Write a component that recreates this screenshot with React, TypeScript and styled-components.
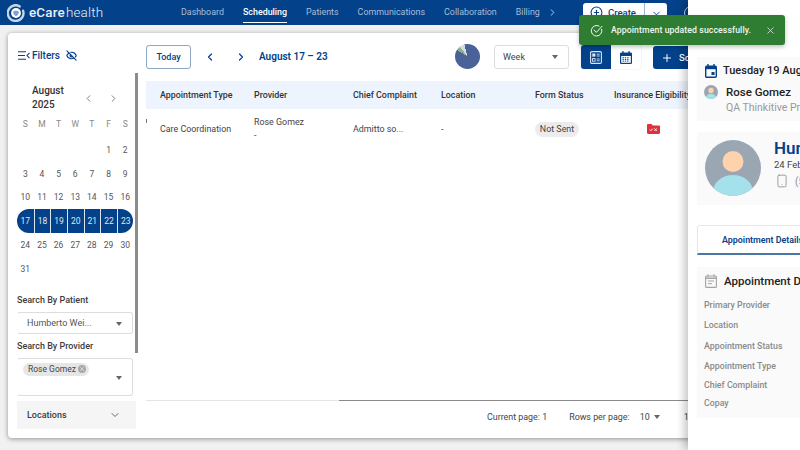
import React from "react";
import styled, { createGlobalStyle } from "styled-components";
import {
    ChevronDown,
    ChevronLeft,
    ChevronRight,
    CirclePlus,
    EyeOff,
    Plus,
    Smartphone,
    X,
} from "lucide-react";

const NAVY = "#03418a";

const GlobalStyle = createGlobalStyle`
    html, body {
        margin: 0;
        padding: 0;
        width: 800px;
        height: 450px;
        overflow: hidden;
        font-family: Roboto, "Liberation Sans", sans-serif;
        background: #f1f1f1;
        color: #333;
    }
    * { box-sizing: border-box; }
`;

const Page = styled.div`
    position: relative;
    width: 800px;
    height: 450px;
    overflow: hidden;
`;

/* ---------- top bar ---------- */
const TopBar = styled.header`
    height: 25px;
    background: ${NAVY};
    display: flex;
    align-items: center;
    padding-left: 7px;
`;

const Logo = styled.div`
    width: 174px;
    display: flex;
    align-items: center;
    gap: 4px;
    color: #e9eff6;
    font-size: 13.4px;
    line-height: 1;
    letter-spacing: 0.2px;
    b { font-weight: 500; }
    span { font-weight: 300; margin-left: 1px; }
`;

const Nav = styled.nav`
    display: flex;
    align-items: center;
    gap: 19px;
    height: 25px;
    width: 402px;
`;

const NavItem = styled.a<{ $active?: boolean }>`
    height: 25px;
    padding-top: 7px;
    font-size: 8.9px;
    line-height: 11px;
    color: ${(p) => (p.$active ? "#fff" : "#a9bdd6")};
    font-weight: ${(p) => (p.$active ? 500 : 400)};
    position: relative;
    ${(p) =>
        p.$active &&
        `&::after {
            content: "";
            position: absolute;
            left: 0;
            right: 0;
            bottom: 2px;
            height: 1px;
            background: #fff;
        }`}
`;

const NavMore = styled.span`
    display: flex;
    margin-left: -12px;
    color: #c5d3e4;
`;

const CreateGroup = styled.div`
    width: 84px;
    height: 19px;
    background: #fff;
    border-radius: 3px;
    display: flex;
    align-items: flex-start;
    color: ${NAVY};
    font-size: 9.5px;
    font-weight: 500;
`;

const CreateMain = styled.div`
    flex: 1;
    height: 100%;
    display: flex;
    gap: 5px;
    padding: 3px 0 0 7px;
    line-height: 13px;
    border-right: 1px solid #9fb5cf;
`;

const CreateCaret = styled.div`
    width: 22px;
    display: flex;
    justify-content: center;
    padding-top: 5px;
`;

const UserCircle = styled.div`
    width: 14px;
    height: 14px;
    margin-left: 17px;
    border-radius: 50%;
    border: 1.5px solid #c5d3e4;
`;

/* ---------- main card ---------- */
const Content = styled.main`
    padding: 8px 0 0 8px;
`;

const Card = styled.section`
    width: 784px;
    height: 405px;
    background: #fff;
    border-radius: 4px;
    box-shadow: 0 1px 5px rgba(0, 0, 0, 0.4);
    display: flex;
    overflow: hidden;
`;

const Sidebar = styled.aside`
    position: relative;
    width: 138px;
    flex: none;
    padding: 14px 0 0 9px;
`;

const FiltersRow = styled.div`
    display: flex;
    align-items: center;
    color: ${NAVY};
    font-size: 10px;
    font-weight: 500;
    height: 16px;
    gap: 6px;
    margin-left: 1px;
    span { margin-left: -4px; }
`;

const SideScroll = styled.div`
    position: absolute;
    left: 127px;
    top: 40px;
    width: 2.5px;
    height: 280px;
    background: #8c8c8c;
`;

const CalHead = styled.div`
    display: flex;
    align-items: center;
    margin-top: 20px;
    padding-left: 15px;
    width: 102px;
    height: 30px;
    justify-content: space-between;
`;

const CalTitle = styled.div`
    width: 36px;
    font-size: 10px;
    font-weight: 500;
    line-height: 14px;
    color: #333;
`;

const CalArrows = styled.div`
    display: flex;
    gap: 14px;
    color: #777;
`;

const WeekRow = styled.div`
    display: grid;
    grid-template-columns: repeat(7, 16.65px);
    height: 14px;
    margin-top: 4px;
`;

const WeekDay = styled.div`
    display: flex;
    align-items: center;
    justify-content: center;
    font-size: 8.5px;
    color: #888;
`;

const CalGrid = styled.div`
    display: grid;
    grid-template-columns: repeat(7, 16.65px);
    grid-auto-rows: 23.75px;
    width: 117px;
    margin-top: 7px;
`;

const DayCell = styled.div<{ $sel?: boolean; $first?: boolean; $last?: boolean }>`
    display: flex;
    align-items: center;
    justify-content: center;
    font-size: 8.5px;
    color: ${(p) => (p.$sel ? "#dfe8f3" : "#555")};
    background: ${(p) => (p.$sel ? NAVY : "transparent")};
    border-left: ${(p) => (p.$sel && !p.$first ? "1.5px solid #dbe5f0" : "none")};
    border-radius: ${(p) =>
        p.$first ? "12px 0 0 12px" : p.$last ? "0 12px 12px 0" : "0"};
`;

const FieldLabel = styled.div<{ $top: number }>`
    margin-top: ${(p) => p.$top}px;
    font-size: 9px;
    font-weight: 500;
    color: #3c3c3c;
    line-height: 12px;
`;

const Field = styled.div<{ $tall?: boolean }>`
    position: relative;
    width: 116px;
    height: ${(p) => (p.$tall ? "38px" : "22px")};
    margin-top: 6px;
    border: 1px solid #ddd;
    border-left-color: transparent;
    border-radius: 3px;
    font-size: 9px;
    color: #555;
    display: flex;
    align-items: ${(p) => (p.$tall ? "flex-start" : "center")};
    padding: ${(p) => (p.$tall ? "4px 0 0 5px" : "0 0 0 9px")};
`;

const Caret = styled.span<{ $color?: string }>`
    width: 0;
    height: 0;
    border-left: 3.5px solid transparent;
    border-right: 3.5px solid transparent;
    border-top: 4px solid ${(p) => p.$color || "#666"};
    display: inline-block;
`;

const FieldCaret = styled(Caret)`
    position: absolute;
    right: 10px;
    top: calc(50% - 1px);
`;

const Chip = styled.div`
    height: 13px;
    width: 66px;
    border-radius: 7px;
    background: #e6e6e6;
    display: flex;
    align-items: center;
    justify-content: space-between;
    padding: 0 3px 0 5px;
    font-size: 8.5px;
    color: #444;
`;

const ChipClose = styled.span`
    width: 8px;
    height: 8px;
    border-radius: 50%;
    background: #a8a8a8;
    color: #e6e6e6;
    display: flex;
    align-items: center;
    justify-content: center;
`;

const Accordion = styled.div`
    width: 119px;
    height: 28px;
    margin-top: 5px;
    background: #f5f5f5;
    display: flex;
    align-items: center;
    justify-content: space-between;
    padding: 0 15px 0 10px;
    font-size: 9px;
    font-weight: 500;
    color: #3c3c3c;
`;

/* ---------- schedule area ---------- */
const Schedule = styled.div`
    flex: 1;
    display: flex;
    flex-direction: column;
    min-width: 0;
`;

const Toolbar = styled.div`
    height: 48px;
    padding-top: 12px;
    display: flex;
    align-items: flex-start;
`;

const TodayButton = styled.button`
    width: 45px;
    height: 24px;
    border: 1px solid #8ea7c4;
    border-radius: 3px;
    background: #fff;
    color: ${NAVY};
    font: 500 9px Roboto, sans-serif;
    padding: 0;
`;

const ArrowBtn = styled.span<{ $first?: boolean }>`
    width: 31px;
    height: 24px;
    margin-left: ${(p) => (p.$first ? "3px" : "0")};
    display: flex;
    align-items: center;
    justify-content: center;
    color: ${NAVY};
`;

const RangeTitle = styled.div`
    margin-left: 3px;
    width: 196px;
    line-height: 24px;
    color: ${NAVY};
    font-size: 10px;
    font-weight: 600;
`;

const Spinner = styled.div`
    width: 25px;
    height: 25px;
    margin-top: -1px;
    border-radius: 50%;
    background: conic-gradient(#4a6298 0 302deg, #8fb08a 302deg 322deg, #d5dde2 322deg 345deg, #4a6298 345deg);
`;

const WeekSelect = styled.div`
    width: 75px;
    height: 24px;
    margin-left: 14px;
    border: 1px solid #ddd;
    border-radius: 3px;
    display: flex;
    align-items: center;
    justify-content: space-between;
    padding: 0 10px 0 8px;
    font-size: 9px;
    color: #444;
`;

const Toggle = styled.div`
    display: flex;
    margin-left: 12px;
    height: 24px;
    width: 60px;
    border-radius: 3px;
    box-shadow: 0 0 1px rgba(0, 0, 0, 0.35);
    overflow: hidden;
`;

const ToggleItem = styled.div<{ $on?: boolean }>`
    width: 30px;
    display: flex;
    align-items: center;
    justify-content: center;
    background: ${(p) => (p.$on ? NAVY : "#fff")};
    color: ${(p) => (p.$on ? "#dce6f2" : NAVY)};
`;

const ScheduleButton = styled.div`
    margin-left: 12px;
    width: 90px;
    height: 23px;
    margin-top: 1px;
    background: ${NAVY};
    color: #fff;
    border-radius: 3px;
    display: flex;
    align-items: center;
    gap: 6px;
    padding-left: 8px;
    font-size: 9.5px;
    font-weight: 500;
`;

const COLUMNS = "94px 99px 88px 94px 79px 120px";

const TableHead = styled.div`
    display: grid;
    grid-template-columns: ${COLUMNS};
    align-items: center;
    height: 28px;
    padding-left: 14px;
    background: #eef4fd;
    font-size: 8.9px;
    font-weight: 500;
    color: #333;
    white-space: nowrap;
`;

const TableRow = styled.div`
    position: relative;
    display: grid;
    grid-template-columns: ${COLUMNS};
    align-items: center;
    height: 40px;
    padding-left: 14px;
    font-size: 8.9px;
    color: #444;
    &::before {
        content: "";
        position: absolute;
        left: 0;
        top: 10px;
        width: 1px;
        height: 4px;
        background: #777;
    }
`;

const ProviderCell = styled.div`
    line-height: 13px;
`;

const StatusPill = styled.span`
    display: inline-block;
    width: 44px;
    height: 15px;
    line-height: 15px;
    text-align: center;
    border-radius: 8px;
    background: #ececec;
    color: #444;
`;

const FolderCell = styled.div`
    padding-left: 33px;
    display: flex;
`;

const TableSpacer = styled.div`
    flex: 1;
`;

const TableRule = styled.div`
    height: 1px;
    background: linear-gradient(to right, #e4e4e4 0 193px, #8a8a8a 193px);
`;

const Footer = styled.div`
    height: 37px;
    display: flex;
    align-items: center;
    padding: 0 0 5px 341px;
    font-size: 8.9px;
    color: #444;
    white-space: nowrap;
`;

const RowsPer = styled.span`
    margin-left: 22px;
`;

const RowsValue = styled.span`
    margin-left: 10px;
    display: flex;
    align-items: center;
    gap: 4px;
`;

const PageRange = styled.span`
    margin-left: 24px;
`;

/* ---------- toast ---------- */
const Toast = styled.div`
    position: absolute;
    left: 579px;
    top: 15px;
    width: 206px;
    height: 30px;
    background: #2e7d32;
    border-radius: 3px;
    box-shadow: 0 2px 4px rgba(0, 0, 0, 0.25);
    color: #f2f7f2;
    display: flex;
    align-items: center;
    padding-left: 11px;
    font-size: 8.7px;
    font-weight: 500;
    z-index: 5;
`;

const ToastText = styled.span`
    margin-left: 8px;
    flex: 1;
    letter-spacing: 0.1px;
`;

const ToastClose = styled.span`
    display: flex;
    margin-right: 9px;
`;

/* ---------- side drawer ---------- */
const Drawer = styled.aside`
    position: absolute;
    left: 688px;
    top: 0;
    width: 112px;
    height: 450px;
    background: #fff;
    box-shadow: -4px 0 8px rgba(0, 0, 0, 0.22);
    overflow: hidden;
    z-index: 3;
    padding: 57px 0 0 9px;
`;

const DrawerInner = styled.div`
    width: 400px;
`;

const Panel = styled.div`
    background: #fafafa;
    padding: 6px 8px;
`;

const DateLine = styled.div`
    display: flex;
    align-items: center;
    gap: 6px;
    color: #222;
    font-size: 11px;
    font-weight: 500;
    height: 15px;
`;

const ProviderLine = styled.div`
    display: flex;
    gap: 8px;
    margin-top: 7px;
    margin-left: -1px;
`;

const ProviderName = styled.div`
    font-size: 11.5px;
    font-weight: 500;
    color: #222;
    line-height: 15px;
`;

const ProviderOrg = styled.div`
    font-size: 10.5px;
    color: #999;
    line-height: 15px;
`;

const PatientPanel = styled(Panel)`
    margin-top: 11px;
    height: 73px;
    display: flex;
    gap: 13px;
    padding-top: 8px;
`;

const PatientName = styled.div`
    font-size: 17px;
    font-weight: 600;
    color: ${NAVY};
    line-height: 20px;
    margin-top: -2px;
`;

const PatientDob = styled.div`
    font-size: 9.5px;
    color: #444;
    line-height: 12px;
    margin-top: 1px;
`;

const PatientPhone = styled.div`
    display: flex;
    align-items: center;
    gap: 6px;
    color: #8a8a8a;
    font-size: 10px;
    margin-top: 3px;
    margin-left: 1px;
`;

const Tabs = styled.div`
    margin-top: 20px;
    height: 30px;
    border: 1px solid #e6e6e6;
    border-bottom: 2px solid #4a77a6;
    border-radius: 3px 3px 0 0;
    padding-left: 24px;
    line-height: 29px;
    font-size: 8.9px;
    font-weight: 600;
    color: ${NAVY};
`;

const DetailsPanel = styled(Panel)`
    margin-top: 12px;
    height: 151px;
    padding: 7px 0 0 7px;
`;

const DetailsTitle = styled.div`
    display: flex;
    align-items: center;
    gap: 7px;
    height: 14px;
    font-size: 11.5px;
    font-weight: 500;
    color: #222;
    margin-left: 1px;
`;

const DetailLabel = styled.div<{ $top: number }>`
    margin-top: ${(p) => p.$top}px;
    font-size: 8.8px;
    line-height: 12px;
    font-weight: 500;
    color: #8a8a8a;
`;

const LogoMark = () => (
    <svg width="18" height="18" viewBox="0 0 24 24" fill="none">
        <path d="M17 3.200A10.500 10.500 0 1 0 21.500 9" stroke="#c4d6e8" strokeWidth="3.200" strokeLinecap="round" />
        <circle cx="12" cy="12" r="6.600" fill="#fff" />
        <path d="M8 10.500c1.500-2 6.500-2 8 0-.5 3-2.500 5-4 5.500-1.500-.5-3.500-2.500-4-5.500z" fill="#7fa3c9" />
    </svg>
);

const PersonAvatar = ({ size }: { size: number }) => (
    <svg width={size} height={size} viewBox="0 0 56 56">
        <clipPath id={`av${size}`}>
            <circle cx="28" cy="28" r="28" />
        </clipPath>
        <g clipPath={`url(#av${size})`}>
            <rect width="56" height="56" fill="#9aa7b3" />
            <circle cx="28" cy="21.500" r="10.500" fill="#fdd2ac" />
            <ellipse cx="28" cy="52" rx="20" ry="17" fill="#a4e1ea" />
        </g>
    </svg>
);

const FolderX = () => (
    <svg width="13" height="10" viewBox="0 0 13 10">
        <path d="M0 1.200C0 .5.500 0 1.200 0h3.300l1.200 1.400h6.100c.7 0 1.200.5 1.200 1.200v6.200c0 .7-.5 1.200-1.200 1.200H1.200C.5 10 0 9.500 0 8.800z" fill="#e0323a" />
        <path d="M2.800 5.600l1.100 1.100 1.900-2M7.500 4.500l2.200 2.400M9.700 4.500L7.500 6.900" stroke="#fff" strokeWidth="1" fill="none" />
    </svg>
);

const FilterIcon = () => (
    <svg width="12" height="9" viewBox="0 0 12 9" fill="none" stroke={NAVY} strokeWidth="1.100">
        <path d="M0 .8h8M0 4.500h7M0 8.200h8M11.500 1.800L9 4.500l2.500 2.700" />
    </svg>
);

const ListViewIcon = () => (
    <svg width="12" height="13" viewBox="0 0 12 13" fill="none" stroke="currentColor">
        <rect x=".6" y=".6" width="10.800" height="11.800" rx="1.200" strokeWidth="1.100" />
        <rect x="2.500" y="2.800" width="2.600" height="2.600" fill="currentColor" strokeWidth=".4" />
        <rect x="2.500" y="7.600" width="2.600" height="2.600" strokeWidth=".9" />
        <path d="M6.700 3.200h3M6.700 5h3M6.700 8h3M6.700 9.800h3" strokeWidth=".9" />
    </svg>
);

const CalendarViewIcon = () => (
    <svg width="12" height="13" viewBox="0 0 12 13" fill="none">
        <rect x="0" y="1.500" width="12" height="11.500" rx="1.200" fill="currentColor" />
        <rect x="1.200" y="5" width="9.600" height="6.800" fill="#fff" />
        <path d="M3 0v3M9 0v3" stroke="currentColor" strokeWidth="1.200" />
        <path d="M2.500 6.700h7M2.500 8.400h7M2.500 10.100h7" stroke="currentColor" strokeWidth="1" strokeDasharray="1.400 .9" />
    </svg>
);

const DateIcon = () => (
    <svg width="12" height="14" viewBox="0 0 12 14" fill="none">
        <rect x=".7" y="2.200" width="10.600" height="11" rx="1" stroke={NAVY} strokeWidth="1.400" />
        <path d="M.7 3h10.600v2.200H.7z" fill={NAVY} />
        <path d="M3 0v3M9 0v3" stroke={NAVY} strokeWidth="1.400" />
        <rect x="6.500" y="8" width="3" height="3" fill={NAVY} />
    </svg>
);

const DetailsIcon = () => (
    <svg width="12" height="14" viewBox="0 0 12 14" fill="none" stroke="#a3a3a3">
        <rect x=".6" y="2" width="10.800" height="11.400" rx="1" strokeWidth="1.100" />
        <path d="M.6 4.200h10.800" strokeWidth="1.500" />
        <path d="M3 .3v2.500M9 .3v2.500" strokeWidth="1.100" />
        <path d="M3 7h6M3 9.700h4" strokeWidth="1" />
    </svg>
);

const ToastCheck = () => (
    <svg width="13" height="13" viewBox="0 0 13 13" fill="none" stroke="currentColor" strokeWidth="1" strokeLinecap="round">
        <path d="M11.700 5.300A5.300 5.300 0 1 1 9 2" />
        <path d="M4 6l2.300 2.400L12 2.300" />
    </svg>
);

const weeks: (number | null)[][] = [
    [null, null, null, null, null, 1, 2],
    [3, 4, 5, 6, 7, 8, 9],
    [10, 11, 12, 13, 14, 15, 16],
    [17, 18, 19, 20, 21, 22, 23],
    [24, 25, 26, 27, 28, 29, 30],
    [31, null, null, null, null, null, null],
];

const App = () => {
    return (
        <Page>
            <GlobalStyle />
            <TopBar>
                <Logo>
                    <LogoMark />
                    <div>
                        <b>eCare</b>
                        <span>health</span>
                    </div>
                </Logo>
                <Nav>
                    <NavItem>Dashboard</NavItem>
                    <NavItem $active>Scheduling</NavItem>
                    <NavItem>Patients</NavItem>
                    <NavItem>Communications</NavItem>
                    <NavItem>Collaboration</NavItem>
                    <NavItem>Billing</NavItem>
                    <NavMore>
                        <ChevronRight size={11} />
                    </NavMore>
                </Nav>
                <CreateGroup>
                    <CreateMain>
                        <CirclePlus size={13} />
                        Create
                    </CreateMain>
                    <CreateCaret>
                        <ChevronDown size={11} />
                    </CreateCaret>
                </CreateGroup>
                <UserCircle />
            </TopBar>

            <Content>
                <Card>
                    <Sidebar>
                        <FiltersRow>
                            <FilterIcon />
                            <span>Filters</span>
                            <EyeOff size={11} strokeWidth={2.6} />
                        </FiltersRow>
                        <SideScroll />
                        <CalHead>
                            <CalTitle>August 2025</CalTitle>
                            <CalArrows>
                                <ChevronLeft size={11} />
                                <ChevronRight size={11} />
                            </CalArrows>
                        </CalHead>
                        <WeekRow>
                            {["S", "M", "T", "W", "T", "F", "S"].map((d, i) => (
                                <WeekDay key={i}>{d}</WeekDay>
                            ))}
                        </WeekRow>
                        <CalGrid>
                            {weeks.flat().map((d, i) => (
                                <DayCell
                                    key={i}
                                    $sel={d !== null && d >= 17 && d <= 23}
                                    $first={d === 17}
                                    $last={d === 23}
                                >
                                    {d}
                                </DayCell>
                            ))}
                        </CalGrid>
                        <FieldLabel $top={13}>Search By Patient</FieldLabel>
                        <Field>
                            Humberto Wei...
                            <FieldCaret />
                        </Field>
                        <FieldLabel $top={6}>Search By Provider</FieldLabel>
                        <Field $tall>
                            <Chip>
                                Rose Gomez
                                <ChipClose>
                                    <X size={6} strokeWidth={3} />
                                </ChipClose>
                            </Chip>
                            <FieldCaret />
                        </Field>
                        <Accordion>
                            Locations
                            <ChevronDown size={12} color="#666" />
                        </Accordion>
                    </Sidebar>

                    <Schedule>
                        <Toolbar>
                            <TodayButton>Today</TodayButton>
                            <ArrowBtn $first>
                                <ChevronLeft size={12} strokeWidth={2.4} />
                            </ArrowBtn>
                            <ArrowBtn>
                                <ChevronRight size={12} strokeWidth={2.4} />
                            </ArrowBtn>
                            <RangeTitle>August 17 – 23</RangeTitle>
                            <Spinner />
                            <WeekSelect>
                                Week
                                <Caret />
                            </WeekSelect>
                            <Toggle>
                                <ToggleItem $on>
                                    <ListViewIcon />
                                </ToggleItem>
                                <ToggleItem>
                                    <CalendarViewIcon />
                                </ToggleItem>
                            </Toggle>
                            <ScheduleButton>
                                <Plus size={12} />
                                Schedule
                            </ScheduleButton>
                        </Toolbar>
                        <TableHead>
                            <div>Appointment Type</div>
                            <div>Provider</div>
                            <div>Chief Complaint</div>
                            <div>Location</div>
                            <div>Form Status</div>
                            <div>Insurance Eligibility</div>
                        </TableHead>
                        <TableRow>
                            <div>Care Coordination</div>
                            <ProviderCell>
                                Rose Gomez
                                <br />-
                            </ProviderCell>
                            <div>Admitto so...</div>
                            <div>-</div>
                            <div>
                                <StatusPill>Not Sent</StatusPill>
                            </div>
                            <FolderCell>
                                <FolderX />
                            </FolderCell>
                        </TableRow>
                        <TableSpacer />
                        <TableRule />
                        <Footer>
                            <span>Current page: 1</span>
                            <RowsPer>Rows per page:</RowsPer>
                            <RowsValue>
                                10 <Caret />
                            </RowsValue>
                            <PageRange>1–1 of 1</PageRange>
                        </Footer>
                    </Schedule>
                </Card>
            </Content>

            <Toast>
                <ToastCheck />
                <ToastText>Appointment updated successfully.</ToastText>
                <ToastClose>
                    <X size={11} strokeWidth={1.6} />
                </ToastClose>
            </Toast>

            <Drawer>
                <DrawerInner>
                    <Panel>
                        <DateLine>
                            <DateIcon />
                            Tuesday 19 Aug 2025
                        </DateLine>
                        <ProviderLine>
                            <PersonAvatar size={14} />
                            <div>
                                <ProviderName>Rose Gomez</ProviderName>
                                <ProviderOrg>QA Thinkitive Practice</ProviderOrg>
                            </div>
                        </ProviderLine>
                    </Panel>
                    <PatientPanel>
                        <PersonAvatar size={56} />
                        <div>
                            <PatientName>Humberto Weil</PatientName>
                            <PatientDob>24 Feb 1990</PatientDob>
                            <PatientPhone>
                                <Smartphone size={14} strokeWidth={1.4} />
                                (555) 010-0199
                            </PatientPhone>
                        </div>
                    </PatientPanel>
                    <Tabs>Appointment Details</Tabs>
                    <DetailsPanel>
                        <DetailsTitle>
                            <DetailsIcon />
                            Appointment Details
                        </DetailsTitle>
                        <DetailLabel $top={11}>Primary Provider</DetailLabel>
                        <DetailLabel $top={8}>Location</DetailLabel>
                        <DetailLabel $top={9}>Appointment Status</DetailLabel>
                        <DetailLabel $top={8}>Appointment Type</DetailLabel>
                        <DetailLabel $top={7}>Chief Complaint</DetailLabel>
                        <DetailLabel $top={6}>Copay</DetailLabel>
                    </DetailsPanel>
                </DrawerInner>
            </Drawer>
        </Page>
    );
};

export default App;
